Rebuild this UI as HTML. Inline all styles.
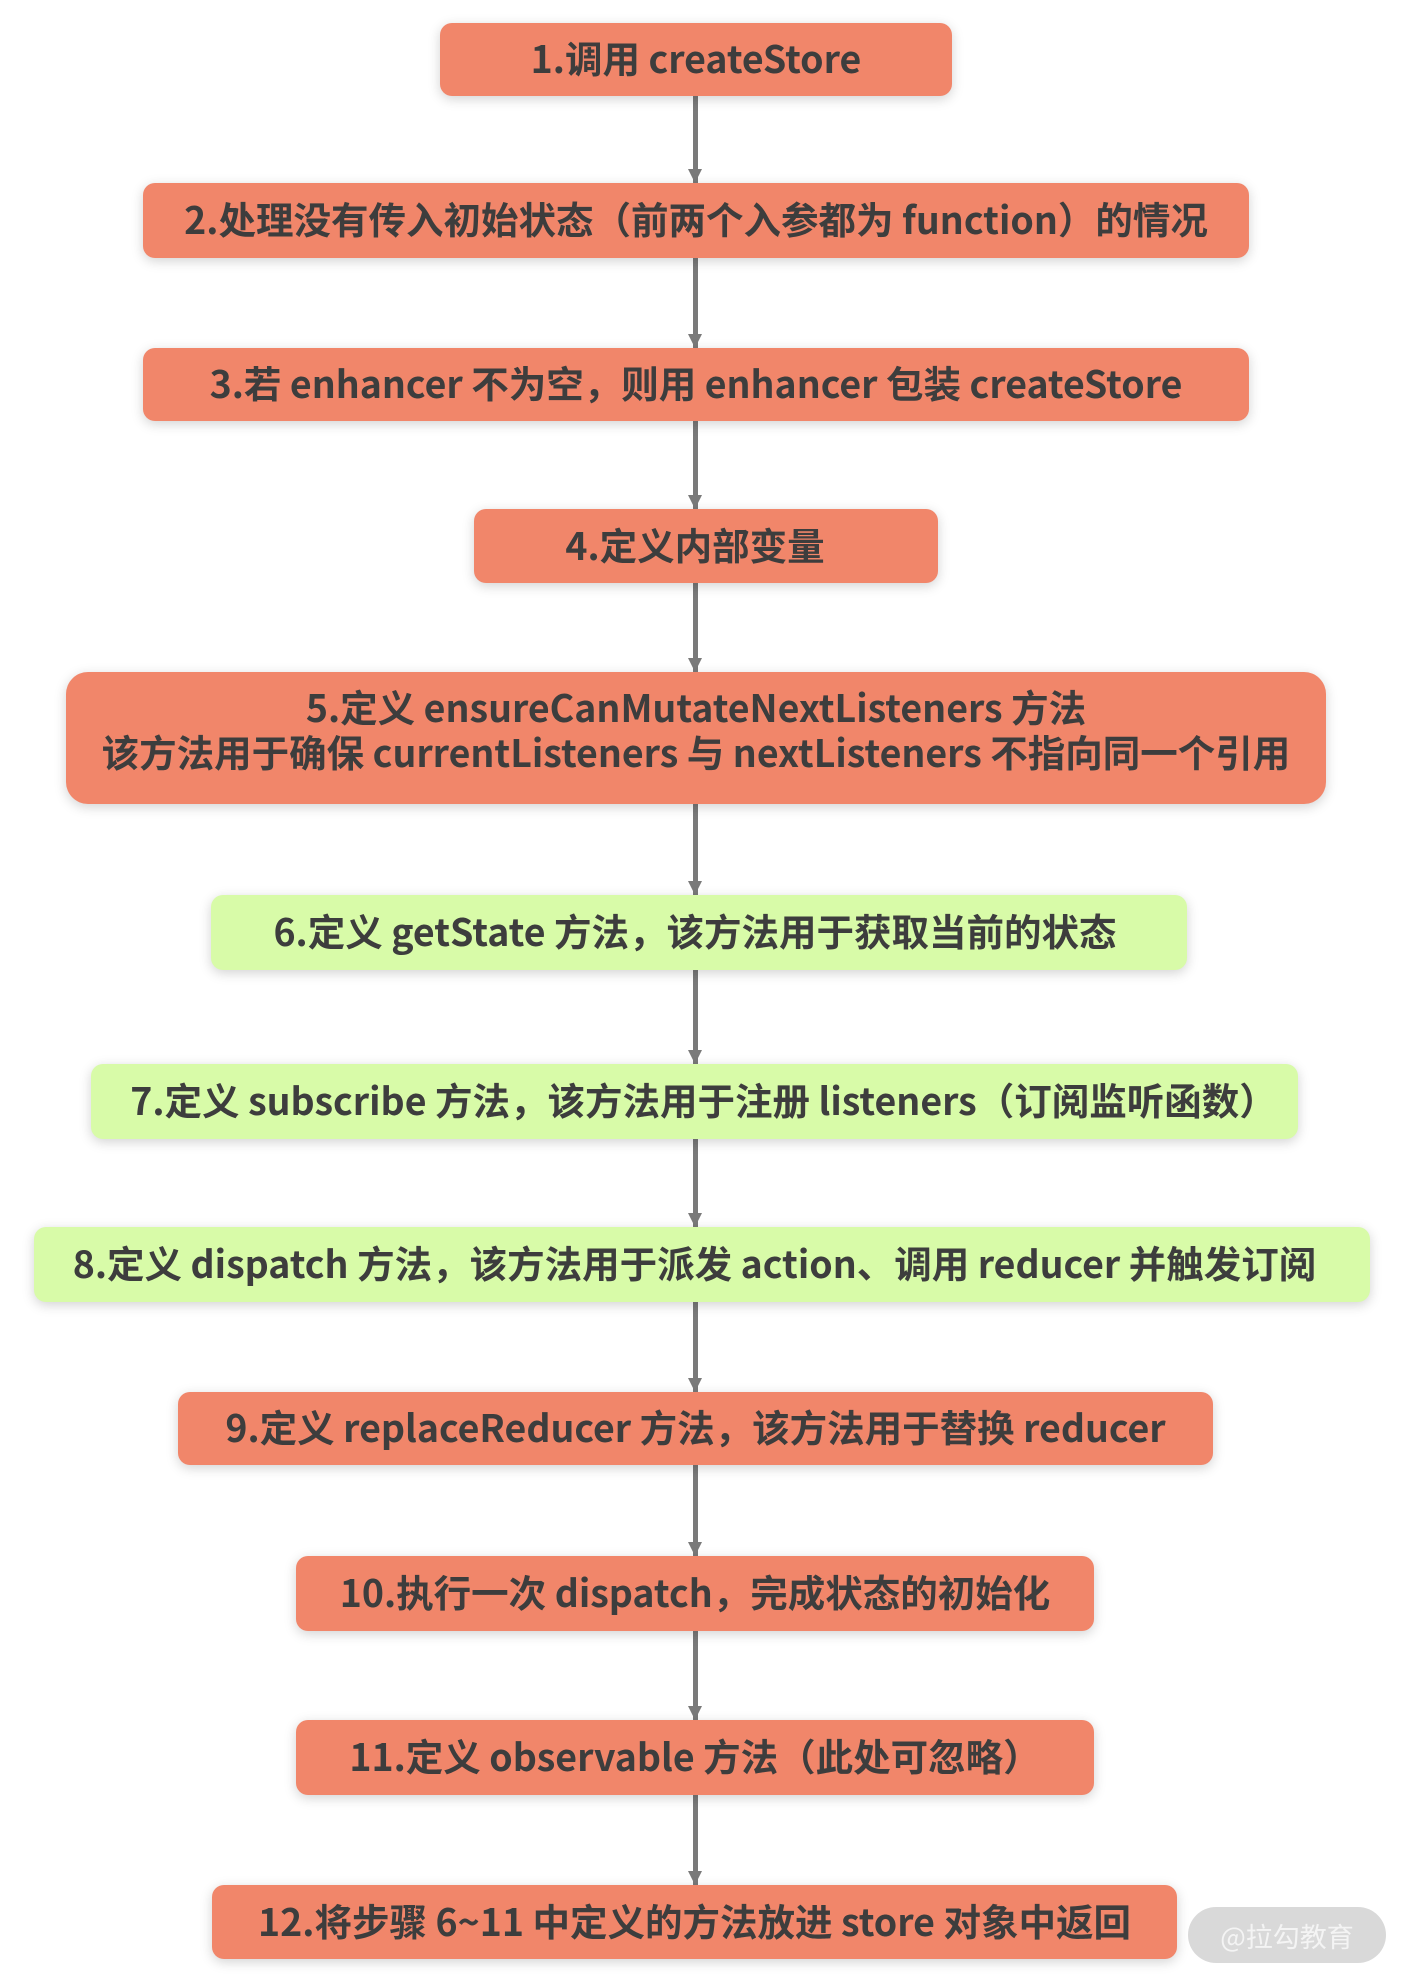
<!DOCTYPE html>
<html><head><meta charset="utf-8"><style>
html,body{margin:0;padding:0;background:#fff;}
body{width:1403px;height:1981px;position:relative;overflow:hidden;font-family:"Liberation Sans","Noto Sans CJK SC",sans-serif;}
.b{position:absolute;box-sizing:border-box;padding-bottom:6px;display:flex;align-items:center;justify-content:center;text-align:center;font-family:"Noto Sans CJK SC","Liberation Sans",sans-serif;font-weight:bold;font-size:37.5px;color:#3d3d3d;border-radius:12px;box-shadow:0 3px 12px rgba(0,0,0,0.18);white-space:nowrap;line-height:45px;}
.o{background:#f1866a;}
.g{background:#d8fba8;}
.l{position:absolute;left:693px;width:5px;background:#7a7a7a;}
.a{position:absolute;left:688px;width:0;height:0;border-left:7.5px solid transparent;border-right:7.5px solid transparent;border-top:14px solid #7a7a7a;}
.wm{position:absolute;left:1188px;top:1907px;width:198px;height:56px;border-radius:28px;background:#d9d9d9;color:#f4f4f4;font-family:"Noto Sans CJK SC",sans-serif;font-size:27px;display:flex;align-items:center;justify-content:center;}
</style></head><body>
<div class="l" style="top:90px;height:95px"></div><div class="a" style="top:169px"></div>
<div class="l" style="top:255px;height:95px"></div><div class="a" style="top:334px"></div>
<div class="l" style="top:418px;height:93px"></div><div class="a" style="top:495px"></div>
<div class="l" style="top:580px;height:94px"></div><div class="a" style="top:658px"></div>
<div class="l" style="top:800px;height:97px"></div><div class="a" style="top:881px"></div>
<div class="l" style="top:967px;height:99px"></div><div class="a" style="top:1050px"></div>
<div class="l" style="top:1136px;height:93px"></div><div class="a" style="top:1213px"></div>
<div class="l" style="top:1299px;height:95px"></div><div class="a" style="top:1378px"></div>
<div class="l" style="top:1462px;height:96px"></div><div class="a" style="top:1542px"></div>
<div class="l" style="top:1628px;height:94px"></div><div class="a" style="top:1706px"></div>
<div class="l" style="top:1792px;height:95px"></div><div class="a" style="top:1871px"></div>

<div class="b o" style="left:440px;top:23px;width:512px;height:73px">1.调用 createStore</div>
<div class="b o" style="left:143px;top:183px;width:1106px;height:75px">2.处理没有传入初始状态（前两个入参都为 function）的情况</div>
<div class="b o" style="left:143px;top:348px;width:1106px;height:73px">3.若 enhancer 不为空，则用 enhancer 包装 createStore</div>
<div class="b o" style="left:474px;top:509px;width:464px;height:74px;padding-right:22px">4.定义内部变量</div>
<div class="b o" style="left:66px;top:672px;width:1260px;height:132px;border-radius:22px;padding-bottom:20px">5.定义 ensureCanMutateNextListeners 方法<br>该方法用于确保 currentListeners 与 nextListeners 不指向同一个引用</div>
<div class="b g" style="left:211px;top:895px;width:976px;height:75px;padding-right:8px">6.定义 getState 方法，该方法用于获取当前的状态</div>
<div class="b g" style="left:91px;top:1064px;width:1207px;height:75px;padding-left:18px">7.定义 subscribe 方法，该方法用于注册 listeners（订阅监听函数）</div>
<div class="b g" style="left:34px;top:1227px;width:1336px;height:75px;padding-right:15px">8.定义 dispatch 方法，该方法用于派发 action、调用 reducer 并触发订阅</div>
<div class="b o" style="left:178px;top:1392px;width:1035px;height:73px">9.定义 replaceReducer 方法，该方法用于替换 reducer</div>
<div class="b o" style="left:296px;top:1556px;width:798px;height:75px">10.执行一次 dispatch，完成状态的初始化</div>
<div class="b o" style="left:296px;top:1720px;width:798px;height:75px">11.定义 observable 方法（此处可忽略）</div>
<div class="b o" style="left:212px;top:1885px;width:965px;height:74px">12.将步骤 6~11 中定义的方法放进 store 对象中返回</div>
<div class="wm">@拉勾教育</div>
</body></html>
